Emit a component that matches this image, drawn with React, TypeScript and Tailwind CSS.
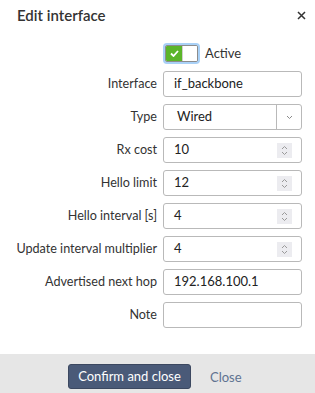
import React from 'react';

const fieldClass =
  'h-[26px] w-full rounded-[3px] border border-[#b9b9b9] bg-white text-[13px] text-[#222] flex items-center';

const Spinner = () => (
  <div className="ml-auto mr-[9px] flex h-[15px] w-[15px] items-center justify-center bg-[#ececf0]">
    <svg width="9" height="13" viewBox="0 0 9 13" fill="none" stroke="#9a9a9a" strokeWidth="1">
      <path d="M2 5 L4.5 2.5 L7 5" />
      <path d="M2 8 L4.5 10.5 L7 8" />
    </svg>
  </div>
);

const Row: React.FC<{ label: string; children: React.ReactNode }> = ({ label, children }) => (
  <>
    <div className="flex h-[26px] items-center justify-end whitespace-nowrap text-[12.6px] text-[#333]">{label}</div>
    {children}
  </>
);

const NumField: React.FC<{ value: string }> = ({ value }) => (
  <div className={fieldClass}>
    <span className="pl-[10px]">{value}</span>
    <Spinner />
  </div>
);

export default function App() {
  return (
    <div className="flex h-[393px] w-[315px] flex-col overflow-hidden bg-white font-['Lato','Liberation_Sans',sans-serif]">
      {/* Header */}
      <div className="flex h-[30px] items-center justify-between pl-[17px] pr-[9px] pt-[1px]">
        <h1 className="text-[15px] font-semibold text-[#333]">Edit interface</h1>
        <svg width="9" height="9" viewBox="0 0 9 9" stroke="#333" strokeWidth="1.5">
          <path d="M1 1 L8 8 M8 1 L1 8" />
        </svg>
      </div>

      {/* Body */}
      <div className="grid grid-cols-[1fr_139px] gap-x-[6px] gap-y-[7px] pl-[10px] pr-[13px] pt-[13px] pb-[26px]">
        <div className="h-[21px]" />
        <div className="flex h-[21px] items-center gap-[5px]">
          <div className="rounded-[4px] bg-[#a9d1f7] p-[2px]">
            <div className="flex h-[17px] w-[33px] overflow-hidden rounded-[2px] border border-[#8c8c8c] bg-white">
              <div className="flex w-[16px] items-center justify-center bg-[#5bb52a]">
                <svg width="9" height="7" viewBox="0 0 9 7" fill="none" stroke="#fff" strokeWidth="1.8">
                  <path d="M1 3.5 L3.5 6 L8 1" />
                </svg>
              </div>
              <div className="flex-1 border-l border-[#d0d0d0] bg-white" />
            </div>
          </div>
          <span className="text-[13px] text-[#333]">Active</span>
        </div>

        <Row label="Interface">
          <div className={fieldClass}>
            <span className="pl-[10px]">if_backbone</span>
          </div>
        </Row>

        <Row label="Type">
          <div className={fieldClass}>
            <span className="pl-[13px]">Wired</span>
            <div className="ml-auto flex h-full w-[25px] items-center justify-center border-l border-[#b9b9b9]">
              <svg width="7" height="5" viewBox="0 0 7 5" fill="none" stroke="#8a8a8a" strokeWidth="1">
                <path d="M1 1 L3.5 3.5 L6 1" />
              </svg>
            </div>
          </div>
        </Row>

        <Row label="Rx cost">
          <NumField value="10" />
        </Row>
        <Row label="Hello limit">
          <NumField value="12" />
        </Row>
        <Row label="Hello interval [s]">
          <NumField value="4" />
        </Row>
        <Row label="Update interval multiplier">
          <NumField value="4" />
        </Row>

        <Row label="Advertised next hop">
          <div className={fieldClass}>
            <span className="pl-[10px]">192.168.100.1</span>
          </div>
        </Row>
        <Row label="Note">
          <div className={fieldClass} />
        </Row>
      </div>

      {/* Footer */}
      <div className="flex flex-1 items-start gap-[19px] bg-[#e6e6e6] pl-[68px] pt-[10px]">
        <button className="h-[25px] w-[123px] rounded-[3px] border border-[#3c4860] bg-[#4a5a78] text-[13px] text-white">
          Confirm and close
        </button>
        <span className="pt-[4px] text-[13px] text-[#5f7391]">Close</span>
      </div>
    </div>
  );
}
